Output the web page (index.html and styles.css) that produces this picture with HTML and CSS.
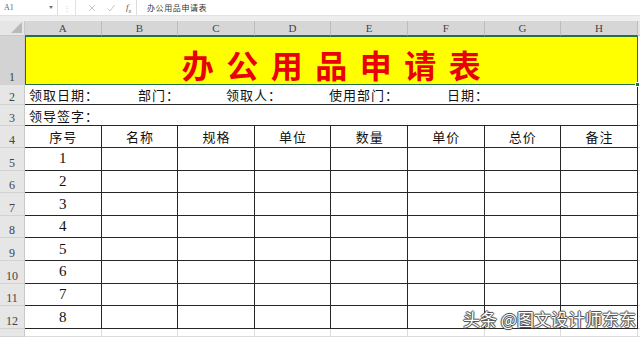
FILE: index.html
```html
<!DOCTYPE html>
<html lang="zh">
<head>
<meta charset="utf-8">
<title>办公用品申请表</title>
<link rel="stylesheet" href="styles.css">
</head>
<body>
<div class="toolbar">
  <div class="namebox"><span class="ref">A1</span><span class="caret"></span></div>
  <div class="sep">⋮</div>
  <div class="fbtns">
    <svg width="10" height="10" viewBox="0 0 10 10"><path d="M2 2 L8 8 M8 2 L2 8" stroke="#c4c4c4" stroke-width="1" fill="none"/></svg>
    <svg width="10" height="10" viewBox="0 0 10 10"><path d="M1.5 5.5 L4 8 L8.5 2" stroke="#c4c4c4" stroke-width="1" fill="none"/></svg>
    <span class="fx">f<sub>x</sub></span>
  </div>
  <div class="formula">办公用品申请表</div>
</div>
<div class="band"></div>
<div class="sheet">
  <div class="corner"><span class="tri"></span></div>
  <div class="ch">A</div><div class="ch">B</div><div class="ch">C</div><div class="ch">D</div>
  <div class="ch">E</div><div class="ch">F</div><div class="ch">G</div><div class="ch">H</div>
  <div class="chf"></div>

  <div class="rh sel">1</div>
  <div class="title">办公用品申请表<span class="handle"></span></div>
  <div class="f"></div>

  <div class="rh">2</div>
  <div class="info"><span class="i1">领取日期：</span><span class="i2">部门：</span><span class="i3">领取人：</span><span class="i4">使用部门：</span><span class="i5">日期：</span></div>
  <div class="f"></div>

  <div class="rh">3</div>
  <div class="info"><span class="i1">领导签字：</span></div>
  <div class="f"></div>

  <div class="rh">4</div>
  <div class="t hd">序号</div><div class="t hd">名称</div><div class="t hd">规格</div><div class="t hd">单位</div>
  <div class="t hd">数量</div><div class="t hd">单价</div><div class="t hd">总价</div><div class="t hd">备注</div>
  <div class="f"></div>

  <div class="rh">5</div>
  <div class="t num">1</div><div class="t"></div><div class="t"></div><div class="t"></div><div class="t"></div><div class="t"></div><div class="t"></div><div class="t"></div>
  <div class="f"></div>

  <div class="rh">6</div>
  <div class="t num">2</div><div class="t"></div><div class="t"></div><div class="t"></div><div class="t"></div><div class="t"></div><div class="t"></div><div class="t"></div>
  <div class="f"></div>

  <div class="rh">7</div>
  <div class="t num">3</div><div class="t"></div><div class="t"></div><div class="t"></div><div class="t"></div><div class="t"></div><div class="t"></div><div class="t"></div>
  <div class="f"></div>

  <div class="rh">8</div>
  <div class="t num">4</div><div class="t"></div><div class="t"></div><div class="t"></div><div class="t"></div><div class="t"></div><div class="t"></div><div class="t"></div>
  <div class="f"></div>

  <div class="rh">9</div>
  <div class="t num">5</div><div class="t"></div><div class="t"></div><div class="t"></div><div class="t"></div><div class="t"></div><div class="t"></div><div class="t"></div>
  <div class="f"></div>

  <div class="rh">10</div>
  <div class="t num">6</div><div class="t"></div><div class="t"></div><div class="t"></div><div class="t"></div><div class="t"></div><div class="t"></div><div class="t"></div>
  <div class="f"></div>

  <div class="rh">11</div>
  <div class="t num">7</div><div class="t"></div><div class="t"></div><div class="t"></div><div class="t"></div><div class="t"></div><div class="t"></div><div class="t"></div>
  <div class="f"></div>

  <div class="rh">12</div>
  <div class="t num">8</div><div class="t"></div><div class="t"></div><div class="t"></div><div class="t"></div><div class="t"></div><div class="t"></div><div class="t"></div>
  <div class="f"></div>

  <div class="rh"></div>
  <div class="c"></div><div class="c"></div><div class="c"></div><div class="c"></div><div class="c"></div><div class="c"></div><div class="c"></div><div class="c"></div>
  <div class="f"></div>
</div>
<div class="watermark">头条 @图文设计师东东</div>
</body>
</html>
```

FILE: styles.css
```css
* { box-sizing: border-box; margin: 0; padding: 0; }
html, body { width: 640px; height: 337px; overflow: hidden; background: #fff; }
body { font-family: "Noto Sans CJK SC", "Noto Sans", sans-serif; position: relative; color: #111; }

.toolbar { height: 15px; display: flex; align-items: center; background: #fff; }
.namebox { width: 58px; height: 15px; display: flex; align-items: center; justify-content: space-between; padding: 0 4px 0 4px; border-right: 1px solid #dcdcdc; }
.ref { font-family: "Liberation Serif", serif; font-size: 8px; color: #666; }
.caret { width: 0; height: 0; border-left: 2px solid transparent; border-right: 2px solid transparent; border-top: 3px solid #777; }
.sep { width: 17px; text-align: center; font-size: 8px; color: #d0d0d0; }
.fbtns { width: 62px; height: 15px; display: flex; align-items: center; justify-content: space-around; padding-left: 6px; border-left: 1px solid #e2e2e2; border-right: 1px solid #dcdcdc; }
.fx { font-family: "Liberation Serif", serif; font-style: italic; font-size: 9px; color: #555; }
.fx sub { font-size: 6px; }
.formula { padding-left: 10px; font-size: 8px; letter-spacing: 0.6px; color: #333; }

.band { height: 6px; background: #eeeeee; border-top: 1px solid #e2e2e2; }

.sheet {
  display: grid;
  grid-template-columns: 25px repeat(8, 76.6px) 1fr;
  grid-template-rows: 15px 49px 19.5px 21px repeat(9, 22.6px) 1fr;
  height: 316px;
}

.corner { background: #e6e6e6; border-right: 1px solid #c9c9c9; border-bottom: 1px solid #c9c9c9; display: flex; align-items: flex-end; justify-content: flex-end; padding: 0 2px 2px 0; }
.tri { width: 0; height: 0; border-left: 11px solid transparent; border-bottom: 11px solid #b9b9b9; }

.ch { background: #d6d6d6; border-right: 1px solid #bcbcbc; border-bottom: 1px solid #217346; font-family: "Liberation Serif", serif; font-size: 11px; color: #444; display: flex; align-items: center; justify-content: center; }
.chf { background: #e6e6e6; border-bottom: 1px solid #c9c9c9; }

.rh { background: #e6e6e6; border-right: 1px solid #c9c9c9; border-bottom: 1px solid #d2d2d2; font-family: "Liberation Serif", serif; font-size: 12px; color: #444; display: flex; align-items: flex-end; justify-content: center; padding-bottom: 1px; line-height: 1; }
.rh.sel { background: #d3d3d3; }

.f { border-bottom: 1px solid #dcdcdc; }
.c { border-right: 1px solid #dcdcdc; border-bottom: 1px solid #dcdcdc; }

.title {
  grid-column: 2 / span 8;
  position: relative;
  background: #ffff00;
  border: 1px solid #217346;
  display: flex; align-items: center; justify-content: center;
  font-size: 32px; font-weight: 700; color: #e8000b;
  letter-spacing: 12.5px; padding-left: 12.5px; padding-top: 6px;
}
.handle { position: absolute; right: -3px; bottom: -3px; width: 5px; height: 5px; background: #217346; border: 1px solid #fff; }

.info {
  grid-column: 2 / span 8;
  border-right: 1px solid #262626; border-bottom: 1px solid #262626;
  display: flex; align-items: center;
  font-size: 13px; color: #111; padding-left: 4px; padding-top: 1px;
  letter-spacing: 1px;
}
.i2 { margin-left: 39px; }
.i3 { margin-left: 46px; }
.i4 { margin-left: 47px; }
.i5 { margin-left: 48px; }

.t { border-right: 1px solid #262626; border-bottom: 1px solid #262626; display: flex; align-items: center; justify-content: center; }
.hd { font-size: 13px; color: #111; letter-spacing: 1px; padding-left: 1px; }
.num { font-family: "Liberation Serif", serif; font-size: 15px; color: #111; }

.watermark {
  position: absolute; left: 463px; top: 306px;
  font-size: 17px; color: #fff;
  text-shadow: 1px 0 0 #555, -1px 0 0 #555, 0 1px 0 #555, 0 -1px 0 #555, 0 0 2px #333;
}
```
